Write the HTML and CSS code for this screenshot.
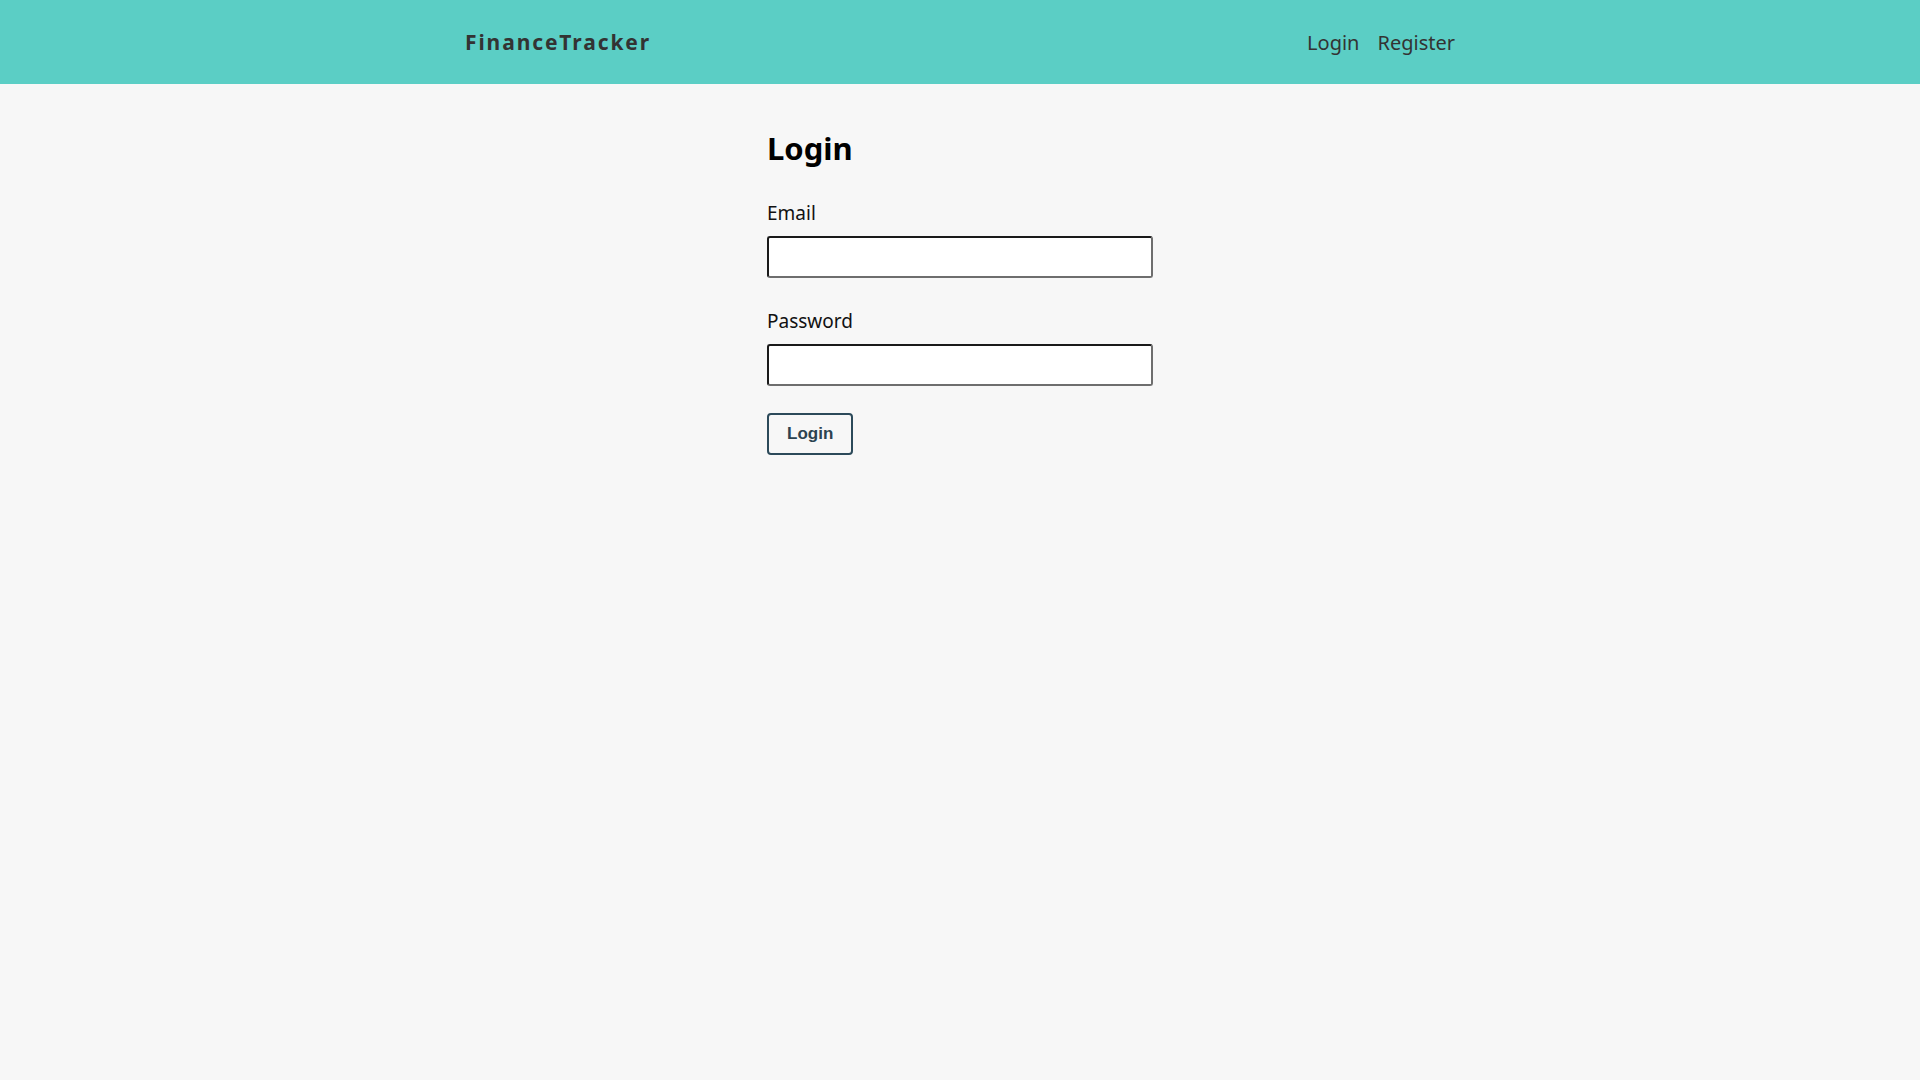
FILE: index.html
```html
<!doctype html>
<html lang="en">
	<head>
		<meta charset="UTF-8" />
		<meta name="viewport" content="width=device-width, initial-scale=1.0" />
		<title>FinanceTracker</title>
		<link rel="stylesheet" href="styles.css">
	</head>

	<body>
		<header>
			<nav class="navbar">
				<a class="brand" href="#">FinanceTracker</a>
				<ul class="navLinks">
					<li><a href="#">Login</a></li>
					<li><a href="#">Register</a></li>
				</ul>
			</nav>
		</header>
		<main>
			<form class="authForm" onsubmit="event.preventDefault()">
				<h1>Login</h1>
				<label for="email">Email</label>
				<input id="email" type="email" autocomplete="off" />
				<label for="password">Password</label>
				<input id="password" type="password" autocomplete="off" />
				<button type="submit">Login</button>
			</form>
		</main>
	</body>
</html>
```

FILE: styles.css
```css
*,
*::before,
*::after {
	box-sizing: border-box;
	margin: 0;
	padding: 0;
}

body {
	background-color: #f7f7f7;
	min-height: 100vh;
	font-family: 'Noto Sans', 'Open Sans', sans-serif;
	color: #111;
}

header {
	background-color: #5bcec5;
	height: 84px;
}

.navbar {
	max-width: 990px;
	height: 100%;
	margin: 0 auto;
	display: flex;
	align-items: center;
	justify-content: space-between;
}

.brand {
	font-size: 21px;
	font-weight: 700;
	letter-spacing: 1.9px;
	color: #333;
	text-decoration: none;
}

.navLinks {
	list-style: none;
	display: flex;
	column-gap: 18px;

	a {
		font-size: 20px;
		color: #333;
		text-decoration: none;
	}
}

main {
	display: flex;
	justify-content: center;
	padding-top: 42px;
}

.authForm {
	width: 386px;
	display: flex;
	flex-direction: column;
	align-items: flex-start;

	h1 {
		font-size: 31px;
		line-height: 44px;
		font-weight: 700;
		color: #000;
		margin-bottom: 27px;
	}

	label {
		font-size: 19px;
		line-height: 26px;
		padding-top: 3px;
		margin-bottom: 10px;
	}

	input {
		width: 100%;
		height: 42px;
		background: #fff;
		border: 2px solid;
		border-color: #1a1a1a #6e6e6e #6e6e6e #1a1a1a;
		border-radius: 3px;
		margin-bottom: 27px;
		padding: 0 8px;
		font-size: 16px;
	}

	button {
		height: 42px;
		padding: 0 18px;
		background: transparent;
		border: 2px solid #2c4a5a;
		border-radius: 4px;
		font-family: 'Liberation Sans', Arial, sans-serif;
		font-size: 17px;
		font-weight: 700;
		color: #2c4350;
		cursor: pointer;
	}
}
```
